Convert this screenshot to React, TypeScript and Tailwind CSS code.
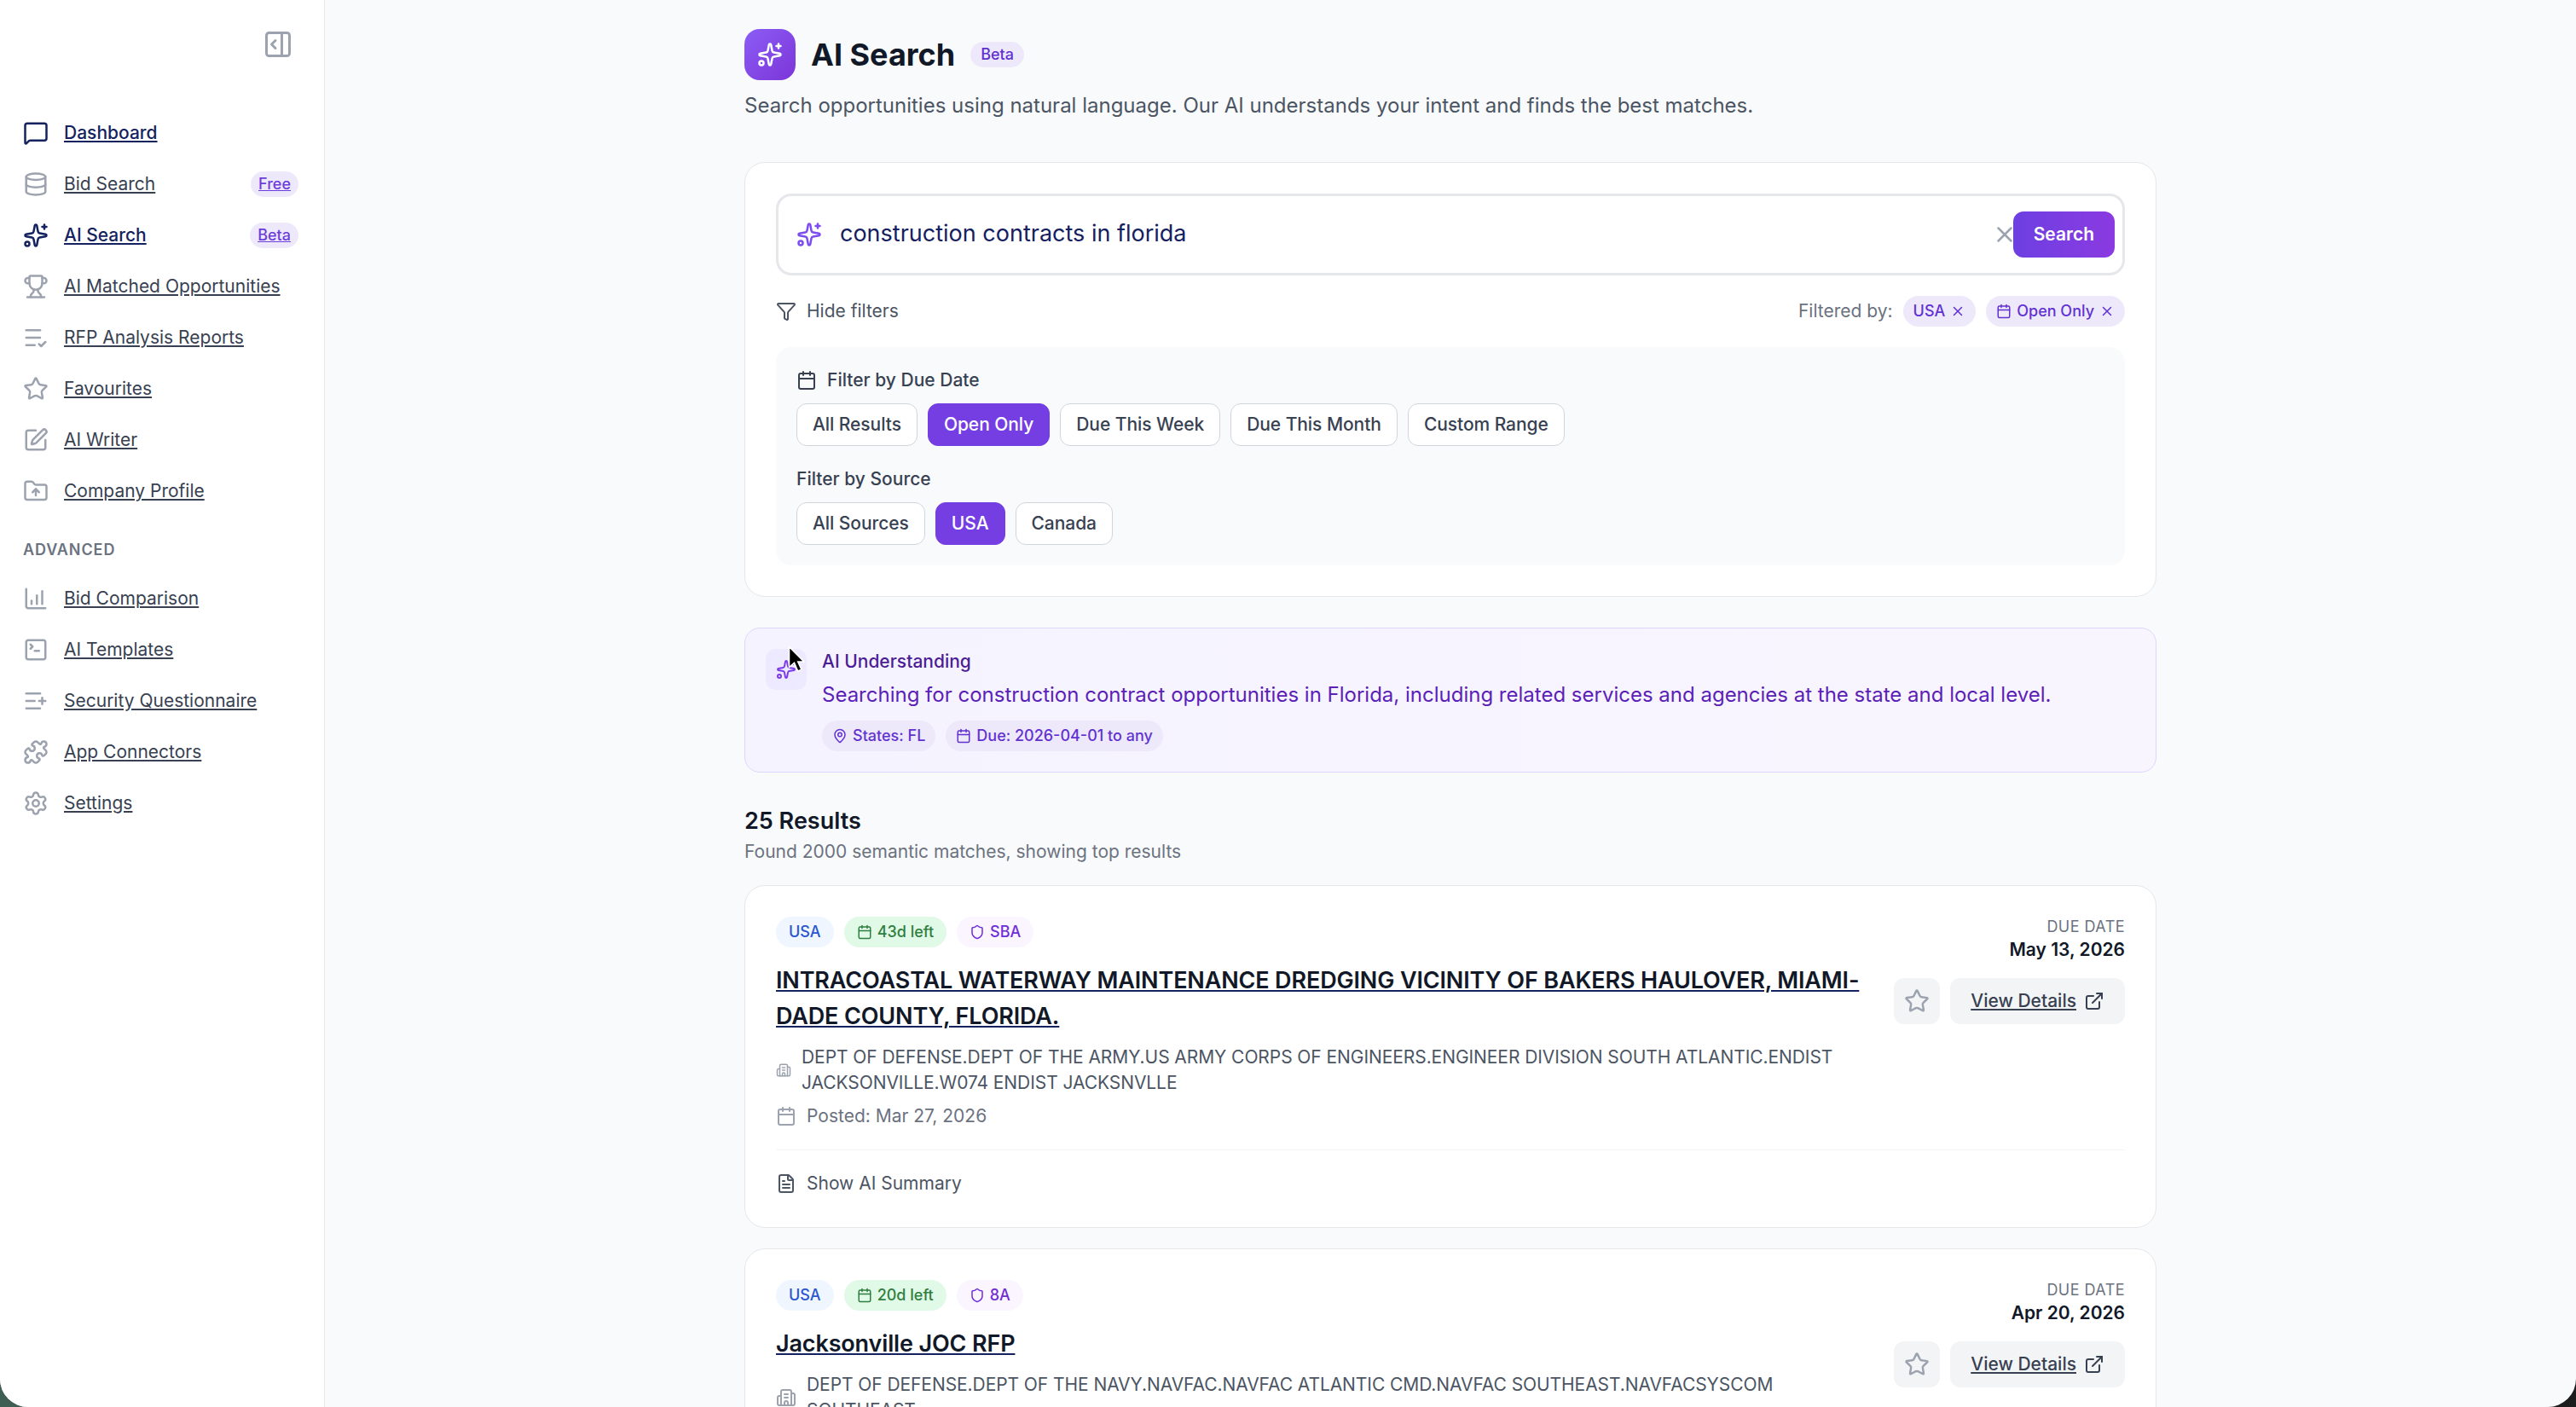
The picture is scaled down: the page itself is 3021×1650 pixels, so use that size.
import {
  Building2,
  Calendar,
  ChartColumnIncreasing,
  ExternalLink,
  FileText,
  FolderUp,
  Funnel,
  ListCheck,
  ListPlus,
  MapPin,
  MessageSquare,
  PanelRightOpen,
  Puzzle,
  Database,
  Settings,
  Shield,
  Sparkles,
  SquarePen,
  SquareTerminal,
  Star,
  Trophy,
  X,
} from 'lucide-react';
import type { ComponentType } from 'react';

type Icon = ComponentType<{ className?: string }>;

const mainNav: { label: string; icon: Icon; active?: boolean; badge?: string }[] = [
  { label: 'Dashboard', icon: MessageSquare, active: true },
  { label: 'Bid Search', icon: Database, badge: 'Free' },
  { label: 'AI Search', icon: Sparkles, active: true, badge: 'Beta' },
  { label: 'AI Matched Opportunities', icon: Trophy },
  { label: 'RFP Analysis Reports', icon: ListCheck },
  { label: 'Favourites', icon: Star },
  { label: 'AI Writer', icon: SquarePen },
  { label: 'Company Profile', icon: FolderUp },
];

const advancedNav: { label: string; icon: Icon }[] = [
  { label: 'Bid Comparison', icon: ChartColumnIncreasing },
  { label: 'AI Templates', icon: SquareTerminal },
  { label: 'Security Questionnaire', icon: ListPlus },
  { label: 'App Connectors', icon: Puzzle },
  { label: 'Settings', icon: Settings },
];

function NavItem({ label, icon: Icon, active, badge }: { label: string; icon: Icon; active?: boolean; badge?: string }) {
  return (
    <a href="#" className="flex h-10 items-center gap-3 pl-2.5 pr-3 text-sm">
      <Icon className={`h-5 w-5 shrink-0 ${active ? 'text-[#14235f]' : 'text-[#9ca3af]'}`} />
      <span className={`flex-1 underline ${active ? 'font-medium text-[#14235f]' : 'text-[#374151]'}`}>{label}</span>
      {badge && (
        <span className="rounded-full bg-[#ede9fb] px-1.5 text-xs leading-5 font-medium text-[#6d3ed9] underline">{badge}</span>
      )}
    </a>
  );
}

function Sidebar() {
  return (
    <aside className="flex w-[254px] shrink-0 flex-col border-r border-[#e5e7eb] bg-white px-2">
      <div className="flex h-[84px] justify-end pt-[22.5px] pr-4">
        <PanelRightOpen className="h-6 w-6 text-[#9ca3af]" />
      </div>
      <nav className="flex flex-col">
        {mainNav.map((item) => (
          <NavItem key={item.label} {...item} />
        ))}
      </nav>
      <div className="mt-[18px] mb-[10px] px-2.5 text-xs font-semibold tracking-wider text-[#6b7280] uppercase">Advanced</div>
      <nav className="flex flex-col">
        {advancedNav.map((item) => (
          <NavItem key={item.label} {...item} />
        ))}
      </nav>
    </aside>
  );
}

function FilterPill({ label, selected }: { label: string; selected?: boolean }) {
  return (
    <button
      className={`rounded-lg border px-3 py-1.5 text-sm font-medium tracking-[-0.04px] ${
        selected ? 'border-[#753ee3] bg-[#753ee3] text-white' : 'border-[#d1d5db] bg-white text-[#374151]'
      }`}
    >
      {label}
    </button>
  );
}

function SearchCard() {
  return (
    <section className="mb-6 rounded-2xl border border-[#e5e7eb] bg-white p-6">
      <div className="relative">
        <Sparkles className="absolute top-[22px] left-4 h-5 w-5 text-[#7c4df0]" />
        <input
          readOnly
          value="construction contracts in florida"
          className="h-16 w-full rounded-xl border-2 border-[#e5e7eb] bg-white pr-24 pb-0.5 pl-12 text-lg text-[#14205f] outline-none"
        />
        <X className="absolute top-[22px] right-[84px] h-5 w-5 text-[#9ca3af]" />
        <button className="absolute top-3.5 right-2 rounded-lg bg-gradient-to-r from-[#6d3fe2] to-[#8a3ae0] px-4 py-2 text-sm font-semibold text-white">
          Search
        </button>
      </div>

      <div className="mt-4 flex items-center justify-between">
        <div className="flex items-center gap-2 text-sm text-[#4b5563]">
          <Funnel className="h-4 w-4" />
          Hide filters
        </div>
        <div className="flex items-center gap-2">
          <span className="text-sm text-[#6b7280]">Filtered by:</span>
          <span className="flex items-center gap-1 rounded-full bg-[#ede9fb] px-2 py-1 text-xs font-medium text-[#6232d0]">
            USA <X className="h-3 w-3" />
          </span>
          <span className="flex items-center gap-1 rounded-full bg-[#ede9fb] px-2 py-1 text-xs font-medium text-[#6232d0]">
            <Calendar className="h-3 w-3" /> Open Only <X className="h-3 w-3" />
          </span>
        </div>
      </div>

      <div className="mt-4 rounded-xl bg-[#f9fafb] p-4">
        <div className="mb-2 flex items-center gap-2 text-sm font-medium text-[#374151]">
          <Calendar className="h-4 w-4" />
          Filter by Due Date
        </div>
        <div className="flex gap-2">
          <FilterPill label="All Results" />
          <FilterPill label="Open Only" selected />
          <FilterPill label="Due This Week" />
          <FilterPill label="Due This Month" />
          <FilterPill label="Custom Range" />
        </div>
        <div className="mt-4 mb-2 text-sm font-medium text-[#374151]">Filter by Source</div>
        <div className="flex gap-2">
          <FilterPill label="All Sources" />
          <FilterPill label="USA" selected />
          <FilterPill label="Canada" />
        </div>
      </div>
    </section>
  );
}

function Understanding() {
  return (
    <section className="mb-6 flex gap-3 rounded-xl border border-[#ddd6fe] bg-gradient-to-r from-[#f5f3ff] to-[#f8f5fe] p-4">
      <div className="relative flex h-8 w-8 shrink-0 items-center justify-center rounded-lg bg-[#ede9fe]">
        <Sparkles className="h-4 w-4 text-[#7c3aed]" />
        {/* mouse pointer caught in the capture */}
        <svg viewBox="0 0 14 22" className="absolute top-[-3px] left-[17px] h-[22px] w-[14px]">
          <path d="M1 1 L1 17 L5 13.5 L7.8 20 L10.6 18.8 L7.8 12.6 L12.6 12.6 Z" fill="#000" stroke="#fff" strokeWidth="1" />
        </svg>
      </div>
      <div>
        <div className="text-sm font-medium text-[#4c1d95]">AI Understanding</div>
        <p className="mt-1 text-base text-[#5b21b6]">
          Searching for construction contract opportunities in Florida, including related services and agencies at the state and local level.
        </p>
        <div className="mt-2 flex gap-2">
          <span className="flex items-center gap-1 rounded-full bg-[#ede9fb] px-2 py-1 text-xs font-medium text-[#6232d0]">
            <MapPin className="h-3 w-3" /> States: FL
          </span>
          <span className="flex items-center gap-1 rounded-full bg-[#ede9fb] px-2 py-1 text-xs font-medium text-[#6232d0]">
            <Calendar className="h-3 w-3" /> Due: 2026-04-01 to any
          </span>
        </div>
      </div>
    </section>
  );
}

type Result = {
  days: string;
  tag: string;
  title: string;
  agency: string;
  agencyIconClass: string;
  posted: string;
  due: string;
};

const results: Result[] = [
  {
    days: '43d left',
    tag: 'SBA',
    title: 'INTRACOASTAL WATERWAY MAINTENANCE DREDGING VICINITY OF BAKERS HAULOVER, MIAMI-DADE COUNTY, FLORIDA.',
    agency: 'DEPT OF DEFENSE.DEPT OF THE ARMY.US ARMY CORPS OF ENGINEERS.ENGINEER DIVISION SOUTH ATLANTIC.ENDIST JACKSONVILLE.W074 ENDIST JACKSNVLLE',
    agencyIconClass: 'h-4 w-3 shrink-0 text-[#9ca3af]',
    posted: 'Mar 27, 2026',
    due: 'May 13, 2026',
  },
  {
    days: '20d left',
    tag: '8A',
    title: 'Jacksonville JOC RFP',
    agency: 'DEPT OF DEFENSE.DEPT OF THE NAVY.NAVFAC.NAVFAC ATLANTIC CMD.NAVFAC SOUTHEAST.NAVFACSYSCOM SOUTHEAST',
    agencyIconClass: 'h-4 w-4 shrink-0 text-[#9ca3af]',
    posted: 'Mar 10, 2026',
    due: 'Apr 20, 2026',
  },
];

function ResultCard({ result }: { result: Result }) {
  return (
    <article className="mb-4 rounded-2xl border border-[#e5e7eb] bg-white p-6">
      <div className="flex justify-between gap-5">
        <div className="min-w-0 flex-1">
          <div className="mb-3 flex gap-2">
            <span className="rounded-full bg-[#eff6ff] px-2.5 py-1 text-xs font-medium text-[#2a55d0]">USA</span>
            <span className="flex items-center gap-1 rounded-full bg-[#e1f9e7] px-2.5 py-1 text-xs font-medium text-[#2f7f3f]">
              <Calendar className="h-3 w-3" /> {result.days}
            </span>
            <span className="flex items-center gap-1 rounded-full bg-[#faf5ff] px-2.5 py-1 text-xs font-medium text-[#6f2dd6]">
              <Shield className="h-3 w-3" /> {result.tag}
            </span>
          </div>
          <a href="#" className="text-lg font-semibold tracking-[-0.1px] text-[#111827] underline decoration-[#14235f]">
            {result.title}
          </a>
          <div className="mt-2 flex flex-col gap-1.5 text-sm">
            <div className="flex items-center gap-2 text-[#4b5563]">
              <Building2 className={result.agencyIconClass} />
              <span className="pr-4 tracking-[-0.05px]">{result.agency}</span>
            </div>
            <div className="flex items-center gap-2 text-[#6b7280]">
              <Calendar className="h-4 w-4 text-[#9ca3af]" />
              Posted: {result.posted}
            </div>
          </div>
        </div>
        <div className="flex shrink-0 flex-col items-end">
          <div className="text-xs tracking-wide text-[#6b7280] uppercase">Due Date</div>
          <div className="mb-3 text-sm font-semibold text-[#111827]">{result.due}</div>
          <div className="flex gap-2">
            <button className="flex h-9 w-9 items-center justify-center rounded-lg bg-[#f3f4f6]">
              <Star className="h-5 w-5 text-[#9ca3af]" />
            </button>
            <a href="#" className="flex h-9 items-center gap-1.5 rounded-lg bg-[#f3f4f6] px-4 text-sm font-medium text-[#374151]">
              <span className="underline">View Details</span>
              <ExternalLink className="h-4 w-4" />
            </a>
          </div>
        </div>
      </div>
      <div className="mt-4 flex items-center gap-2 border-t border-[#f3f4f6] pt-4 text-sm text-[#4b5563]">
        <FileText className="h-4 w-4" />
        Show AI Summary
      </div>
    </article>
  );
}

export default function App() {
  return (
    <div className="h-[1650px] w-[3021px] overflow-hidden bg-gradient-to-r from-[#3f5f55] via-[#1c1c1c] to-[#1c1c1c]">
      <div className="flex h-[1100px] w-[2014px] overflow-hidden rounded-b-[22px] bg-[#f9fafb] font-['Inter',sans-serif] [zoom:1.5]">
        <Sidebar />
        <main className="min-w-0 flex-1 overflow-hidden">
          <div className="mx-auto max-w-6xl px-6 pt-[22.67px]">
            <div className="flex items-center gap-3">
              <div className="flex h-10 w-10 items-center justify-center rounded-xl bg-gradient-to-br from-[#8b5cf6] to-[#7c34d8]">
                <Sparkles className="h-5 w-5 text-white" />
              </div>
              <h1 className="text-2xl font-bold text-[#111827]">AI Search</h1>
              <span className="rounded-full bg-[#ede9fb] px-2 text-xs leading-5 font-medium text-[#5f30cf]">Beta</span>
            </div>
            <p className="mt-2 mb-8 text-base text-[#4b5563]">
              Search opportunities using natural language. Our AI understands your intent and finds the best matches.
            </p>
            <SearchCard />
            <Understanding />
            <h2 className="text-lg font-semibold text-[#111827]">25 Results</h2>
            <p className="mb-4 text-sm text-[#6b7280]">Found 2000 semantic matches, showing top results</p>
            {results.map((result) => (
              <ResultCard key={result.title} result={result} />
            ))}
          </div>
        </main>
      </div>
    </div>
  );
}
